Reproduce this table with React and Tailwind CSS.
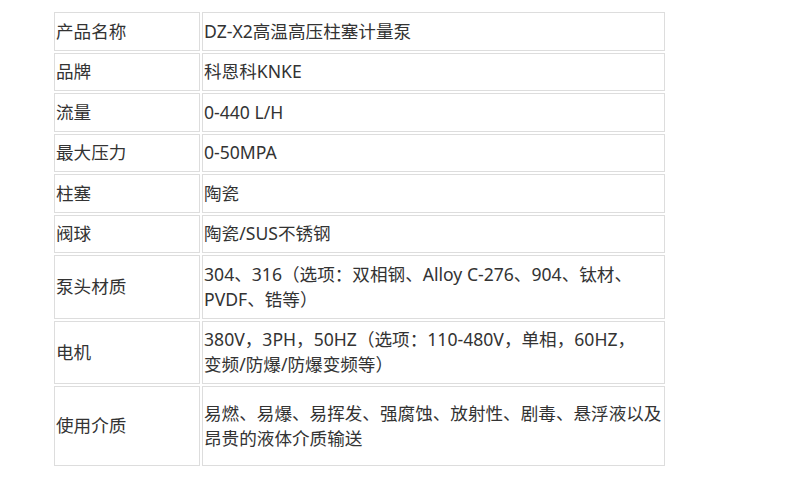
export default function App() {
  const rows = [
    { k: "产品名称", v: ["DZ-X2高温高压柱塞计量泵"] },
    { k: "品牌", v: ["科恩科KNKE"] },
    { k: "流量", v: ["0-440 L/H"] },
    { k: "最大压力", v: ["0-50MPA"] },
    { k: "柱塞", v: ["陶瓷"] },
    { k: "阀球", v: ["陶瓷/SUS不锈钢"] },
    { k: "泵头材质", v: ["304、316（选项：双相钢、Alloy C-276、904、钛材、", "PVDF、锆等）"] },
    { k: "电机", v: ["380V，3PH，50HZ（选项：110-480V，单相，60HZ，", "变频/防爆/防爆变频等）"] },
    { k: "使用介质", v: ["易燃、易爆、易挥发、强腐蚀、放射性、剧毒、悬浮液以及", "昂贵的液体介质输送"], tall: true },
  ];

  return (
    <div
      className="w-[801px] h-[486px] bg-white overflow-hidden pl-[52px] pt-[10px] text-[#333] text-[17.6px]"
      style={{ fontFamily: '"Noto Sans", "Noto Sans CJK SC", sans-serif' }}
    >
      <table className="table-fixed w-[615px] border-separate border-spacing-[2px]">
        <colgroup>
          <col className="w-[146px]" />
          <col className="w-[463px]" />
        </colgroup>
        <tbody>
          {rows.map((r) => (
            <tr key={r.k} className={r.tall ? "h-[79.5px]" : ""}>
              <td className="border border-[#ddd] px-[1px] py-[5.75px] leading-[25px] align-middle whitespace-nowrap">
                {r.k}
              </td>
              <td className="border border-[#ddd] px-[1px] py-[5.75px] leading-[25px] align-middle">
                {r.v.map((line, i) => (
                  <div key={i} className="whitespace-nowrap">{line}</div>
                ))}
              </td>
            </tr>
          ))}
        </tbody>
      </table>
    </div>
  );
}
